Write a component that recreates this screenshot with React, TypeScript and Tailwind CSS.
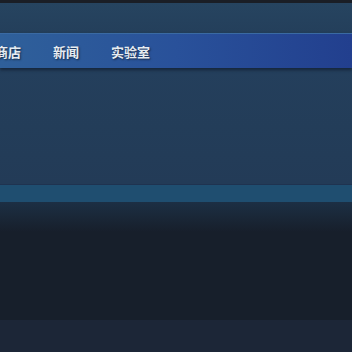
import React from 'react';

const navItems = ['商店', '新闻', '实验室'];

export default function App() {
    return (
        <div className="w-[352px] h-[352px] overflow-hidden flex flex-col bg-[#171f2b]" style={{ fontFamily: '"Noto Sans CJK SC", "Liberation Sans", sans-serif' }}>
            {/* top bar */}
            <div className="h-[3px] bg-[#1a1e26]" />
            <div className="h-[30px] bg-gradient-to-b from-[#264460] to-[#243f5b]" />

            {/* nav */}
            <div className="h-[35px] flex items-center bg-gradient-to-r from-[#2f609a] via-[#29519a] to-[#223f8e] border-t border-[#3a6aa3] shadow-[0_2px_3px_rgba(10,20,35,0.6)] relative z-10">
                <div className="flex items-center gap-[32px] ml-[-5px]">
                    {navItems.map((item) => (
                        <span key={item} className="text-[13px] font-bold text-[#e6ecf2] leading-none [text-shadow:1px_1px_2px_rgba(0,0,0,0.55)]">
                            {item}
                        </span>
                    ))}
                </div>
            </div>

            {/* content */}
            <div className="h-[116px] bg-gradient-to-b from-[#243f5c] via-[#233d59] to-[#233b57]" />
            <div className="h-[1px] bg-[#1f3350]" />
            <div className="h-[17px] bg-[#1f4e70]" />
            <div className="h-[30px] bg-gradient-to-b from-[#1c2f44] to-[#171f2b]" />
            <div className="h-[88px] bg-[#171f2b]" />
            <div className="flex-1 bg-[#1c2637]" />
        </div>
    );
}
